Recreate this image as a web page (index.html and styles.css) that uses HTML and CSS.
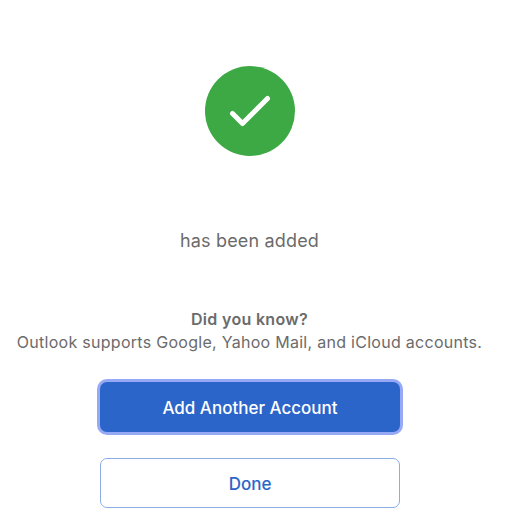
FILE: index.html
```html
<!DOCTYPE html>
<html lang="en">
<head>
<meta charset="utf-8">
<title>Account added</title>
<link rel="stylesheet" href="styles.css">
</head>
<body>
<main class="dialog">
  <svg class="badge" viewBox="0 0 90 90" aria-hidden="true">
    <circle cx="45" cy="45" r="45"/>
    <path d="M27.5 47.5 37.5 57.5 62.5 32.5"/>
  </svg>
  <p class="status"><span>has been added</span></p>
  <h2 class="tip-title"><span>Did you know?</span></h2>
  <p class="tip"><span>Outlook supports Google, Yahoo Mail, and iCloud accounts.</span></p>
  <button class="button primary"><span>Add Another Account</span></button>
  <button class="button secondary"><span>Done</span></button>
</main>
</body>
</html>
```

FILE: styles.css
```css
* { box-sizing: border-box; }
body { margin: 0; background: #fff; color: #6b6b6b; font-family: Inter, sans-serif; }
.dialog { width: 499px; height: 526px; padding-top: 66px; display: flex; flex-direction: column; align-items: center; white-space: nowrap; }
.badge { width: 90px; height: 90px; flex: none; margin-left: 1px; }
.badge circle { fill: #3da945; }
.badge path { fill: none; stroke: #fff; stroke-width: 5; stroke-linecap: round; stroke-linejoin: round; }
.status { margin: 73px 0 0; font-size: 18px; line-height: 24px; letter-spacing: 0.17px; }
.tip-title { margin: 55px 0 0; font-size: 16px; line-height: 23px; font-weight: 600; letter-spacing: 0.32px; }
.tip { margin: 0; font-size: 16px; line-height: 23px; letter-spacing: 0.28px; }
.button { width: 300px; height: 50px; margin-left: 1px; padding: 2px 0 0; border-radius: 7px; font: 500 17px/24px Inter, sans-serif; flex: none; }
.primary { margin-top: 28px; color: #fff; background: #2b65c9; border: 0; box-shadow: 0 0 0 3px #96a9f5; }
.secondary { margin-top: 26px; color: #2b65c9; background: #fff; border: 1px solid #8aade6; }
```
